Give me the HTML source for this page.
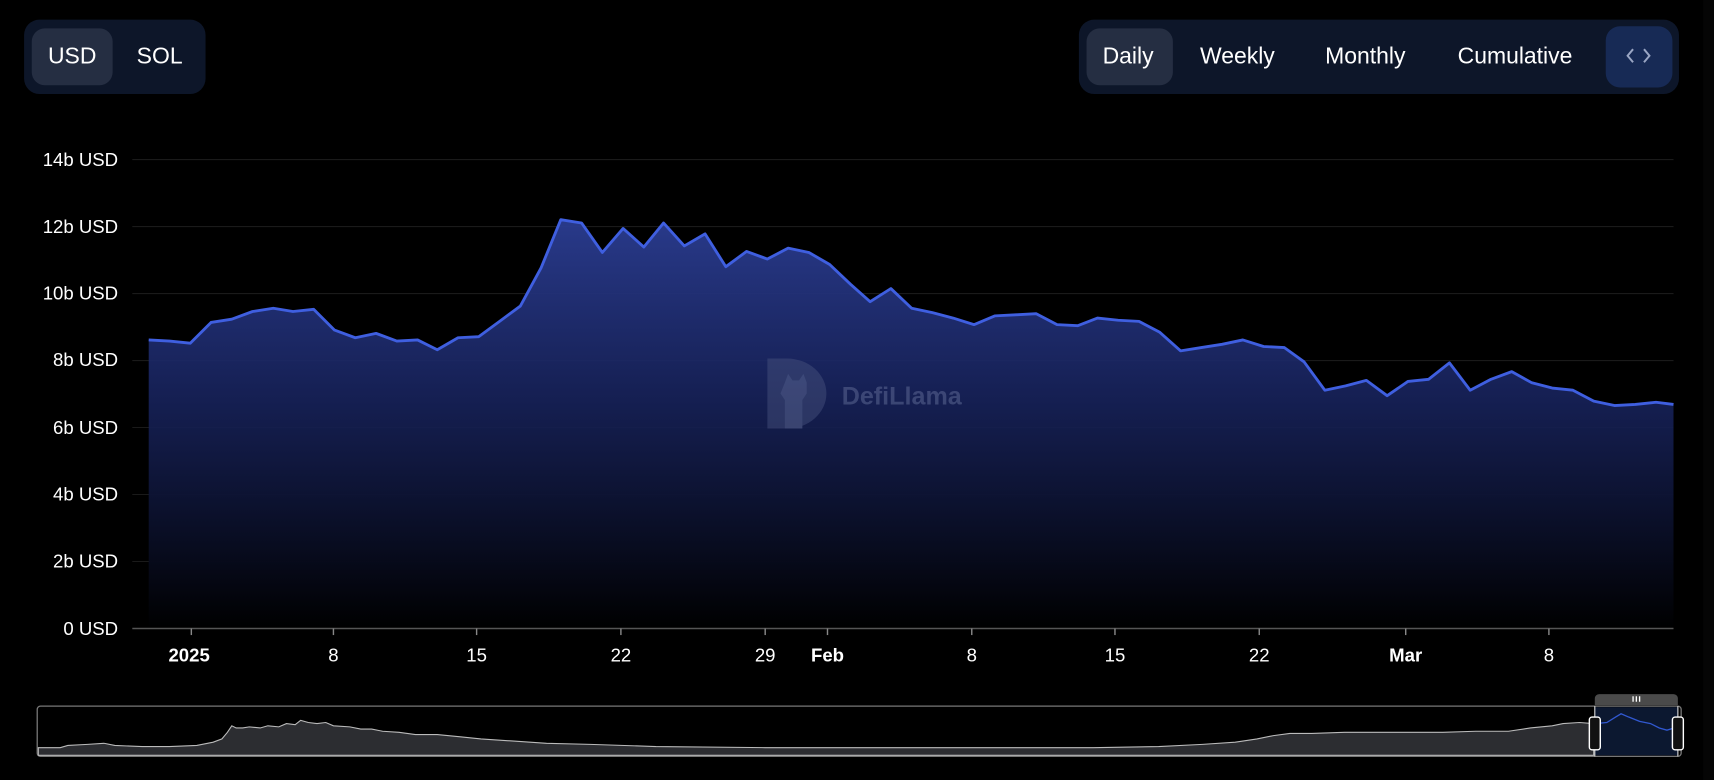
<!DOCTYPE html>
<html><head><meta charset="utf-8"><style>
html,body{margin:0;padding:0;background:#000;width:1714px;height:780px;overflow:hidden}
svg{display:block}
text{font-family:"Liberation Sans",Arial,sans-serif}
</style></head><body>
<svg width="1714" height="780" viewBox="0 0 1568 713.6" xmlns="http://www.w3.org/2000/svg">
<defs>
<linearGradient id="g" x1="0" y1="200" x2="0" y2="575" gradientUnits="userSpaceOnUse">
<stop offset="0" stop-color="#2b3d92" stop-opacity="0.95"/>
<stop offset="0.45" stop-color="#17225a" stop-opacity="0.9"/>
<stop offset="1" stop-color="#000" stop-opacity="1"/>
</linearGradient>
</defs>
<rect width="1568" height="714" fill="#000"/>
<rect x="22" y="18" width="166" height="68" rx="14" fill="#0d1629"/>
<rect x="29" y="26" width="74" height="52" rx="12" fill="#252e42"/>
<text x="66" y="58" font-size="21" fill="#fff" text-anchor="middle">USD</text>
<text x="146" y="58" font-size="21" fill="#fff" text-anchor="middle">SOL</text>
<rect x="987" y="18" width="549" height="68" rx="14" fill="#0d1629"/>
<rect x="994" y="26" width="79" height="52" rx="12" fill="#252e42"/>
<text x="1032" y="58" font-size="21" fill="#fff" text-anchor="middle">Daily</text>
<text x="1132" y="58" font-size="21" fill="#fff" text-anchor="middle">Weekly</text>
<text x="1249" y="58" font-size="21" fill="#fff" text-anchor="middle">Monthly</text>
<text x="1386" y="58" font-size="21" fill="#fff" text-anchor="middle">Cumulative</text>
<rect x="1469" y="24" width="61" height="56" rx="13" fill="#172a55"/>
<path d="M1494 45 L1489 51 L1494 57 M1504 45 L1509 51 L1504 57" stroke="#9aa6c4" stroke-width="1.8" fill="none"/>
<g stroke="#1a1a1a" stroke-width="1">
<line x1="121" y1="146" x2="1531" y2="146"/><line x1="121" y1="207.3" x2="1531" y2="207.3"/>
<line x1="121" y1="268.6" x2="1531" y2="268.6"/><line x1="121" y1="329.9" x2="1531" y2="329.9"/>
<line x1="121" y1="391.1" x2="1531" y2="391.1"/><line x1="121" y1="452.4" x2="1531" y2="452.4"/>
<line x1="121" y1="513.7" x2="1531" y2="513.7"/>
</g>
<g font-size="17" fill="#fff" text-anchor="end">
<text x="108" y="152">14b USD</text><text x="108" y="213">12b USD</text>
<text x="108" y="274">10b USD</text><text x="108" y="335">8b USD</text>
<text x="108" y="397">6b USD</text><text x="108" y="458">4b USD</text>
<text x="108" y="519">2b USD</text><text x="108" y="581">0 USD</text>
</g>
<path fill="url(#g)" d="M136,311 L155,312 174,314 193,295 212,292 231,285 250,282 268,285 287,283 306,302 325,309 344,305 363,312 382,311 400,320 419,309 438,308 457,294 476,280 495,245 513,201 532,204 551,231 570,209 589,226 607,204 626,225 645,214 664,244 683,230 702,237 721,227 740,231 759,242 778,260 796,276 815,264 834,282 853,286 872,291 891,297 910,289 929,288 948,287 967,297 986,298 1004,291 1023,293 1042,294 1061,304 1080,321 1099,318 1118,315 1137,311 1156,317 1175,318 1193,331 1212,357 1231,353 1250,348 1269,362 1288,349 1307,347 1326,332 1345,357 1364,347 1383,340 1401,350 1420,355 1439,357 1458,367 1477,371 1496,370 1515,368 1531,370 L1531,575 L136,575 Z"/>
<g opacity="0.45">
<path d="M702,328 h18 a36,32 0 0 1 0,64 h-18 z" fill="#4a5580"/>
<path d="M718,350 l3,-8 4,6 h6 l4,-6 3,8 v10 l-4,6 v26 h-16 v-26 l-4,-6z" fill="#6a76a0"/>
<text x="770" y="370" font-size="23" font-weight="bold" fill="#6a76a0">DefiLlama</text>
</g>
<polyline fill="none" stroke="#3f5fe0" stroke-width="2.6" stroke-linejoin="round" points="136,311 155,312 174,314 193,295 212,292 231,285 250,282 268,285 287,283 306,302 325,309 344,305 363,312 382,311 400,320 419,309 438,308 457,294 476,280 495,245 513,201 532,204 551,231 570,209 589,226 607,204 626,225 645,214 664,244 683,230 702,237 721,227 740,231 759,242 778,260 796,276 815,264 834,282 853,286 872,291 891,297 910,289 929,288 948,287 967,297 986,298 1004,291 1023,293 1042,294 1061,304 1080,321 1099,318 1118,315 1137,311 1156,317 1175,318 1193,331 1212,357 1231,353 1250,348 1269,362 1288,349 1307,347 1326,332 1345,357 1364,347 1383,340 1401,350 1420,355 1439,357 1458,367 1477,371 1496,370 1515,368 1531,370"/>
<line x1="121" y1="575" x2="1531" y2="575" stroke="#555" stroke-width="1.3"/>
<g stroke="#888" stroke-width="1.3">
<line x1="175" y1="575" x2="175" y2="581"/><line x1="305" y1="575" x2="305" y2="581"/>
<line x1="436" y1="575" x2="436" y2="581"/><line x1="568" y1="575" x2="568" y2="581"/>
<line x1="700" y1="575" x2="700" y2="581"/><line x1="757" y1="575" x2="757" y2="581"/>
<line x1="889" y1="575" x2="889" y2="581"/><line x1="1020" y1="575" x2="1020" y2="581"/>
<line x1="1152" y1="575" x2="1152" y2="581"/><line x1="1286" y1="575" x2="1286" y2="581"/>
<line x1="1417" y1="575" x2="1417" y2="581"/>
</g>
<g font-size="17" fill="#fff" text-anchor="middle">
<text x="173" y="605" font-weight="bold">2025</text><text x="305" y="605">8</text>
<text x="436" y="605">15</text><text x="568" y="605">22</text><text x="700" y="605">29</text>
<text x="757" y="605" font-weight="bold">Feb</text><text x="889" y="605">8</text>
<text x="1020" y="605">15</text><text x="1152" y="605">22</text>
<text x="1286" y="605" font-weight="bold">Mar</text><text x="1417" y="605">8</text>
</g>
<rect x="34" y="646" width="1504" height="46" rx="3" fill="none" stroke="#777" stroke-width="1.2"/>
<path fill="#2c2d31" stroke="#bbb" stroke-width="1" d="M35,684 L55,684 62,682 80,681 95,680 105,682 130,683 155,683 180,682 195,679 203,676 208,670 212,664 216,666 222,666 228,665 238,666 245,664 255,665 262,662 270,663 275,659 282,661 290,662 298,661 305,664 320,665 330,667 340,667 350,669 365,670 380,672 400,672 420,674 440,676 470,678 500,680 540,681 600,683 700,684 850,684 1000,684 1060,683 1100,681 1130,679 1150,676 1165,673 1180,671 1200,671 1230,670 1280,670 1320,670 1350,669 1380,669 1400,666 1420,664 1430,662 1445,661 1458,662 L1458,691 L35,691 Z"/>
<rect x="1459" y="647" width="76" height="44" fill="#0c1830"/>
<path fill="none" stroke="#3158d0" stroke-width="1.2" d="M1459,662 L1470,661 1478,656 1483,653 1490,656 1500,660 1510,662 1518,666 1525,668 1535,665"/>
<path d="M1459,645 v-6 a4,4 0 0 1 4,-4 h68 a4,4 0 0 1 4,4 v6 z" fill="#4a4a4a"/>
<g stroke="#fff" stroke-width="1.2"><line x1="1494" y1="637" x2="1494" y2="642"/><line x1="1497" y1="637" x2="1497" y2="642"/><line x1="1500" y1="637" x2="1500" y2="642"/></g>
<line x1="1459" y1="646" x2="1459" y2="692" stroke="#ddd" stroke-width="1"/>
<line x1="1535" y1="646" x2="1535" y2="692" stroke="#ddd" stroke-width="1"/>
<rect x="1454" y="656" width="10" height="30" rx="2.5" fill="#111" stroke="#fff" stroke-width="1.3"/>
<rect x="1530" y="656" width="10" height="30" rx="2.5" fill="#111" stroke="#fff" stroke-width="1.3"/>
<rect x="1558" y="0" width="10" height="714" fill="#050505"/>
</svg>
</body></html>
